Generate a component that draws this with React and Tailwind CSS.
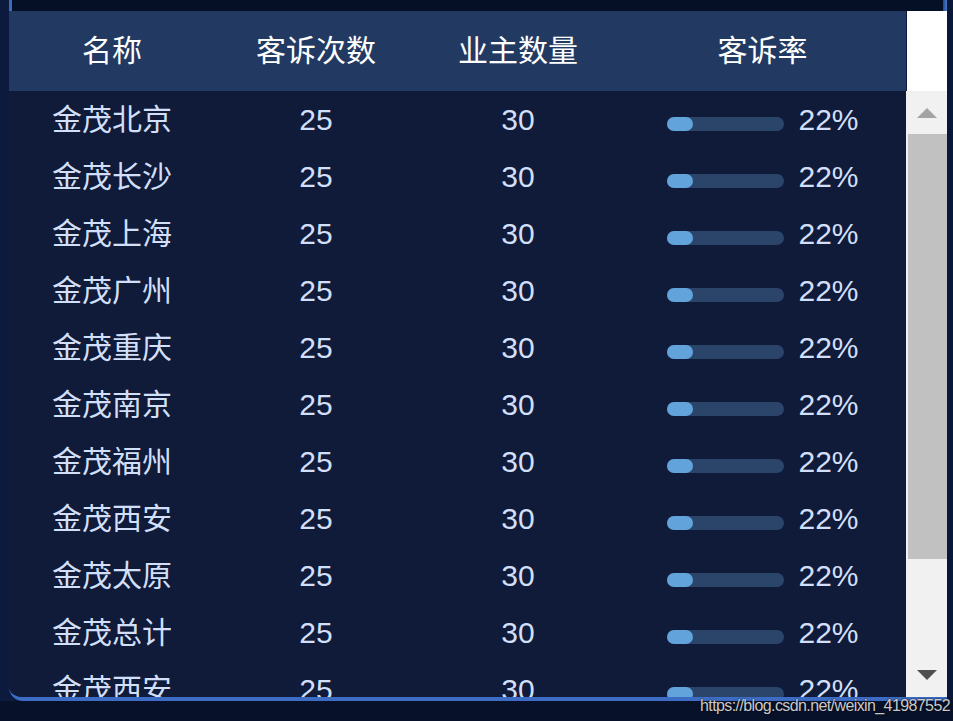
const rows = [
  '金茂北京',
  '金茂长沙',
  '金茂上海',
  '金茂广州',
  '金茂重庆',
  '金茂南京',
  '金茂福州',
  '金茂西安',
  '金茂太原',
  '金茂总计',
  '金茂西安',
];

const font = { fontFamily: '"Liberation Sans", "Noto Sans CJK SC", sans-serif' };

function Row({ name }) {
  return (
    <div className="flex h-[57px] shrink-0 items-center text-[30px] leading-none text-[#d2dff8]">
      <div className="w-[206px] text-center">{name}</div>
      <div className="w-[202px] text-center">25</div>
      <div className="w-[202px] text-center">30</div>
      <div className="flex w-[287px] items-center justify-center gap-[15px]">
        <div className="mt-[8px] h-[14px] w-[117px] rounded-full bg-[#2b4469]">
          <div className="h-full w-[26px] rounded-full bg-[#62a3dc]" />
        </div>
        <span className="w-[60px]">22%</span>
      </div>
    </div>
  );
}

function ScrollBar() {
  return (
    <div className="flex w-[41px] flex-col">
      <div className="ml-[1px] h-[80px] bg-white" />
      <div className="flex flex-1 flex-col bg-[#f1f1f1]">
        <div className="flex h-[43px] items-center justify-center pl-[1px]">
          <div className="h-0 w-0 border-x-[10px] border-b-[10px] border-x-transparent border-b-[#a3a3a3]" />
        </div>
        <div className="ml-[2px] h-[425px] bg-[#c1c1c1]" />
        <div className="flex-1" />
        <div className="flex h-[42px] items-start justify-center pl-[1px] pt-[15px]">
          <div className="h-0 w-0 border-x-[10px] border-t-[10px] border-x-transparent border-t-[#505050]" />
        </div>
      </div>
    </div>
  );
}

export default function App() {
  return (
    <div className="relative flex h-[721px] w-[953px] flex-col overflow-hidden bg-[#07112a]" style={font}>
      <div className="flex bg-[#0b1a3d]">
        <div className="w-[9px]" />
        <div className="flex h-[701px] w-[938px] flex-col overflow-hidden rounded-bl-[14px] border-b-[4px] border-[#3c6cc4]">
          {/* top strip */}
          <div className="flex h-[11px] shrink-0 bg-[#050f25]">
            <div className="w-[3px] bg-[#3b6cc0]" />
            <div className="flex-1" />
            <div className="w-[4px] bg-gradient-to-r from-[#24468c] to-[#4a7bd0]" />
          </div>
          <div className="flex min-h-0 flex-1">
            <div className="flex w-[897px] flex-col bg-[#0f1b38]">
              <div className="flex h-[80px] shrink-0 items-center bg-[#223a62] text-[30px] leading-none text-white">
                <div className="w-[206px] text-center">名称</div>
                <div className="w-[202px] text-center">客诉次数</div>
                <div className="w-[202px] text-center">业主数量</div>
                <div className="w-[287px] text-center">客诉率</div>
              </div>
              <div className="flex min-h-0 flex-1 flex-col overflow-hidden">
                {rows.map((name, i) => (
                  <Row key={i} name={name} />
                ))}
              </div>
            </div>
            <ScrollBar />
          </div>
        </div>
        <div className="flex-1 bg-[#0a1838]" />
      </div>
      <div className="flex-1" />
      <div className="absolute bottom-[7px] right-[3px] text-[16px] leading-none tracking-[-0.6px] text-[#c9c9c9] [text-shadow:0_0_2px_#000]">
        https://blog.csdn.net/weixin_41987552
      </div>
    </div>
  );
}
